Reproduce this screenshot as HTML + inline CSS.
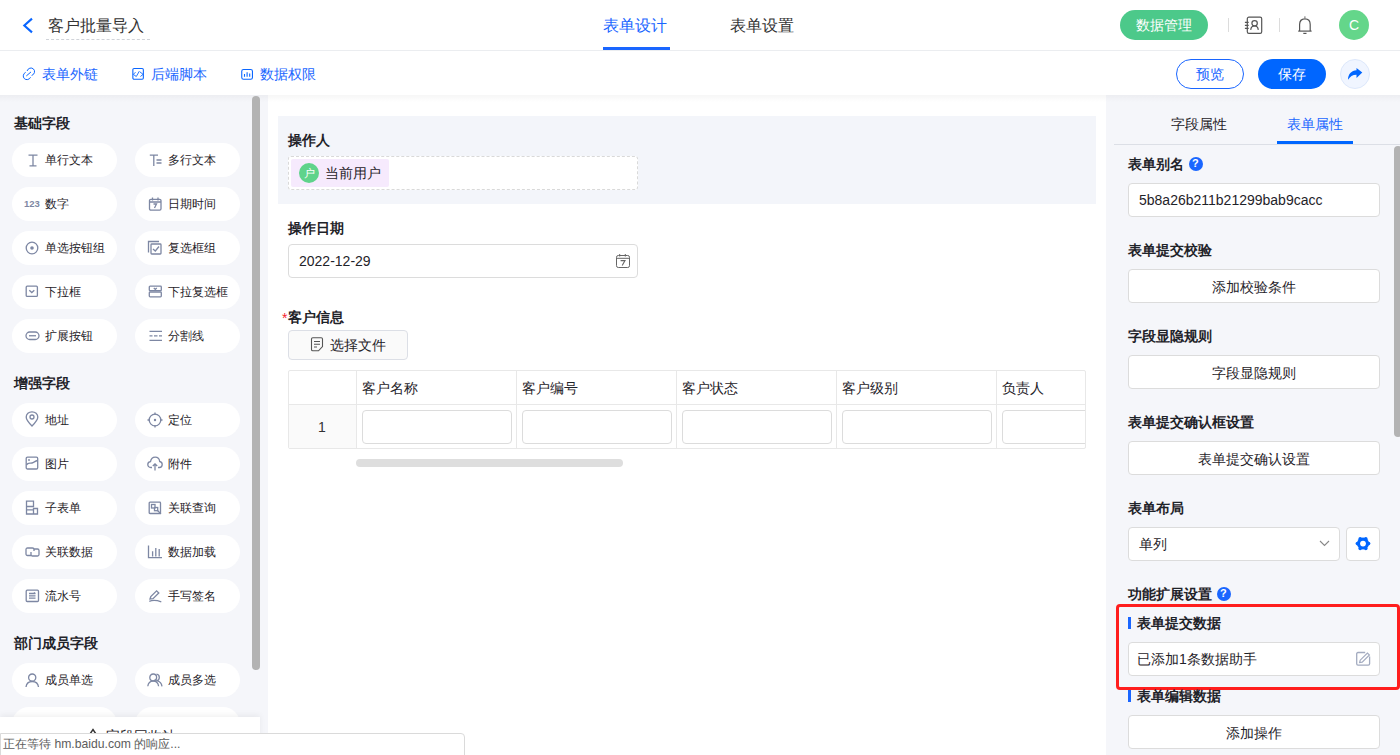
<!DOCTYPE html>
<html><head><meta charset="utf-8">
<style>
*{box-sizing:border-box;margin:0;padding:0}
html,body{width:1400px;height:755px;overflow:hidden;background:#fff;font-family:"Liberation Sans",sans-serif;color:#1f2329}
.a{position:absolute}
.t{position:absolute;white-space:nowrap;line-height:1}
svg{position:absolute;overflow:visible}
#hdr{left:0;top:0;width:1400px;height:51px;border-bottom:1px solid #ebedf0;background:#fff}
#tb{left:0;top:51px;width:1400px;height:44px;background:#fff}
#lp{left:0;top:95px;width:268px;height:660px;background:#f5f6fa}
#cv{left:268px;top:95px;width:838px;height:660px;background:#fff}
#rp{left:1106px;top:95px;width:294px;height:660px;background:#f5f6fa}
.shadow{left:0;top:95px;width:1400px;height:7px;background:linear-gradient(rgba(0,0,0,0.035),rgba(0,0,0,0))}
.sec{font-size:14px;font-weight:bold;color:#1f2329}
.pill{position:absolute;width:105px;height:34px;border-radius:17px;background:#fff}
.pill .t{left:33px;top:11px;font-size:12px;color:#1f2329}
.pill svg{left:12px;top:10px}
.lbl{font-size:14px;font-weight:bold;color:#1f2329}
.inp{position:absolute;background:#fff;border:1px solid #dcdcdc;border-radius:4px}
.btn{position:absolute;background:#fff;border:1px solid #dcdcdc;border-radius:4px;font-size:14px;color:#1f2329;text-align:center}
</style></head><body>
<!-- header -->
<div id="hdr" class="a"></div>
<svg style="left:22px;top:17px" width="12" height="17" viewBox="0 0 12 17"><path d="M10 1.6 L2.3 8.5 L10 15.4" fill="none" stroke="#0a66ff" stroke-width="2.1"/></svg>
<div class="t" style="left:48px;top:18px;font-size:16px;color:#333">客户批量导入</div>
<div class="a" style="left:46px;top:39px;width:104px;border-top:1px dashed #d0d3d9"></div>
<div class="t" style="left:603px;top:18px;font-size:16px;color:#1a66ff">表单设计</div>
<div class="a" style="left:603px;top:47px;width:67px;height:3px;background:#1a66ff"></div>
<div class="t" style="left:730px;top:18px;font-size:16px;color:#333">表单设置</div>
<div class="a" style="left:1120px;top:10px;width:88px;height:30px;border-radius:15px;background:#4cc98a"></div>
<div class="t" style="left:1136px;top:18px;font-size:14px;color:#fff">数据管理</div>
<div class="a" style="left:1228px;top:18px;width:1px;height:14px;background:#dcdcdc"></div>
<svg style="left:1244px;top:16px" width="19" height="19" viewBox="0 0 19 19"><g fill="none" stroke="#555" stroke-width="1.2"><rect x="3.3" y="1.2" width="14.4" height="16.1" rx="1.6"/><path d="M0.9 6.3 H4.7 M0.9 9.3 H4.7 M0.9 12.3 H4.7"/><circle cx="10.6" cy="7.3" r="2.7"/><path d="M6.7 13.9 C7 11 8.6 9.9 10.5 9.9 C12.4 9.9 14 11 14.3 13.9"/></g></svg>
<div class="a" style="left:1279px;top:18px;width:1px;height:14px;background:#dcdcdc"></div>
<svg style="left:1297px;top:16px" width="16" height="19" viewBox="0 0 16 19"><g fill="none" stroke="#555" stroke-width="1.2"><path d="M7.9 0.5 V1.8"/><path d="M2.6 15 V8.6 C2.6 5 4.9 2.9 7.9 2.9 C10.9 2.9 13.2 5 13.2 8.6 V15"/><path d="M1.2 15.1 H14.6"/><path d="M6.3 17.4 H9.5"/></g></svg>
<div class="a" style="left:1339px;top:10px;width:30px;height:30px;border-radius:50%;background:#64d68a"></div>
<div class="t" style="left:1349px;top:18px;font-size:14px;color:#fff">C</div>

<!-- toolbar -->
<div id="tb" class="a"></div>
<svg style="left:22px;top:67px" width="14" height="14" viewBox="0 0 14 14"><g fill="none" stroke="#0a66ff" stroke-width="1" stroke-linecap="round"><path d="M5.2 3.6 A3.8 3.8 0 1 1 10 8.35"/><path d="M3.3 5.5 A3.8 3.8 0 1 0 8.4 10.6"/><path d="M4.6 8.7 L8.7 5.2"/></g></svg>
<div class="t" style="left:42px;top:67px;font-size:14px;color:#1a66ff">表单外链</div>
<svg style="left:132px;top:67px" width="13" height="14" viewBox="0 0 13 14"><rect x="0.85" y="1.45" width="10.5" height="10.8" rx="1.2" fill="none" stroke="#0a66ff" stroke-width="1.1"/><path d="M3.5 5.2 L1.3 7.4 L4.3 9.5 L7.3 4.2 M7.9 4.85 L11.1 7.4 L8.4 9.5" fill="none" stroke="#0a66ff" stroke-width="0.9"/></svg>
<div class="t" style="left:151px;top:67px;font-size:14px;color:#1a66ff">后端脚本</div>
<svg style="left:241px;top:68px" width="13" height="13" viewBox="0 0 13 13"><rect x="0.75" y="1.55" width="10.7" height="9.7" rx="1.8" fill="none" stroke="#0a66ff" stroke-width="1.1"/><path d="M3.5 6 V8.8 M6.1 4.2 V8.8 M8.7 5.4 V8.8" stroke="#0a66ff" stroke-width="1.1"/></svg>
<div class="t" style="left:260px;top:67px;font-size:14px;color:#1a66ff">数据权限</div>
<div class="a" style="left:1176px;top:59px;width:68px;height:30px;border-radius:15px;border:1px solid #1a66ff;background:#fff"></div>
<div class="t" style="left:1196px;top:67px;font-size:14px;color:#1a66ff">预览</div>
<div class="a" style="left:1258px;top:59px;width:68px;height:30px;border-radius:15px;background:#0066ff"></div>
<div class="t" style="left:1278px;top:67px;font-size:14px;color:#fff">保存</div>
<div class="a" style="left:1340px;top:59px;width:30px;height:30px;border-radius:50%;background:#f0f5ff;border:1px solid #dde8fb"></div>
<svg style="left:1347px;top:67px" width="17" height="14" viewBox="0 0 17 14"><path d="M1 12.8 C1 7.2 4.5 3.6 9.5 3.3 V0.9 L15.3 5.5 L9.5 10.9 V7.7 C5.5 7.7 3 9.5 1 12.8 Z" fill="#0066ff"/></svg>

<!-- left panel -->
<div id="lp" class="a"></div>
<div id="cv" class="a"></div>
<div id="rp" class="a"></div>
<div class="a shadow"></div>

<div class="t sec" style="left:14px;top:116px">基础字段</div>
<div class="pill" style="left:12px;top:143px"><div class="t">单行文本</div></div>
<div class="pill" style="left:135px;top:143px"><div class="t">多行文本</div></div>
<div class="pill" style="left:12px;top:187px"><div class="t">数字</div></div>
<div class="pill" style="left:135px;top:187px"><div class="t">日期时间</div></div>
<div class="pill" style="left:12px;top:231px"><div class="t">单选按钮组</div></div>
<div class="pill" style="left:135px;top:231px"><div class="t">复选框组</div></div>
<div class="pill" style="left:12px;top:275px"><div class="t">下拉框</div></div>
<div class="pill" style="left:135px;top:275px"><div class="t">下拉复选框</div></div>
<div class="pill" style="left:12px;top:319px"><div class="t">扩展按钮</div></div>
<div class="pill" style="left:135px;top:319px"><div class="t">分割线</div></div>

<div class="t sec" style="left:14px;top:376px">增强字段</div>
<div class="pill" style="left:12px;top:403px"><div class="t">地址</div></div>
<div class="pill" style="left:135px;top:403px"><div class="t">定位</div></div>
<div class="pill" style="left:12px;top:447px"><div class="t">图片</div></div>
<div class="pill" style="left:135px;top:447px"><div class="t">附件</div></div>
<div class="pill" style="left:12px;top:491px"><div class="t">子表单</div></div>
<div class="pill" style="left:135px;top:491px"><div class="t">关联查询</div></div>
<div class="pill" style="left:12px;top:535px"><div class="t">关联数据</div></div>
<div class="pill" style="left:135px;top:535px"><div class="t">数据加载</div></div>
<div class="pill" style="left:12px;top:579px"><div class="t">流水号</div></div>
<div class="pill" style="left:135px;top:579px"><div class="t">手写签名</div></div>

<div class="t sec" style="left:14px;top:636px">部门成员字段</div>
<div class="pill" style="left:12px;top:663px"><div class="t">成员单选</div></div>
<div class="pill" style="left:135px;top:663px"><div class="t">成员多选</div></div>
<div class="pill" style="left:12px;top:707px"></div>
<div class="pill" style="left:135px;top:707px"></div>

<!--icons-->
<svg style="left:27px;top:154px" width="12" height="13" viewBox="0 0 12 13"><path d="M1.5 1.2 H10.5 M2.5 11.8 H9.5 M6 1.2 V11.8" fill="none" stroke="#7d87a3" stroke-width="1.3" stroke-width="1.5"/></svg>
<svg style="left:24px;top:199px" width="17" height="9" viewBox="0 0 17 9"><text x="0" y="7.8" font-family="Liberation Sans" font-weight="bold" font-size="9.5" fill="#7d87a3">123</text></svg>
<svg style="left:25px;top:241px" width="14" height="14" viewBox="0 0 14 14"><circle cx="7" cy="7" r="5.8" fill="none" stroke="#7d87a3" stroke-width="1.3"/><circle cx="7" cy="7" r="1.8" fill="#7d87a3"/></svg>
<svg style="left:25px;top:285px" width="14" height="13" viewBox="0 0 14 13"><rect x="1.2" y="1.2" width="11.2" height="10.2" rx="1" fill="none" stroke="#7d87a3" stroke-width="1.3"/><path d="M4.3 5.2 L6.8 7.5 L9.3 5.2" fill="none" stroke="#7d87a3" stroke-width="1.3"/></svg>
<svg style="left:25px;top:331px" width="15" height="10" viewBox="0 0 15 10"><rect x="1" y="1" width="13" height="7.5" rx="3.75" fill="none" stroke="#7d87a3" stroke-width="1.3"/><path d="M4 4.75 H11" fill="none" stroke="#7d87a3" stroke-width="1.3"/></svg>
<svg style="left:149px;top:154px" width="13" height="13" viewBox="0 0 13 13"><path d="M0.8 1.2 H9 M4.8 1.2 V12 M7.5 6 H12.5 M7.5 9 H12.5" fill="none" stroke="#7d87a3" stroke-width="1.3" stroke-width="1.5"/></svg>
<svg style="left:148px;top:197px" width="15" height="14" viewBox="0 0 15 14"><rect x="1.5" y="2.3" width="11.5" height="10.8" rx="1.3" fill="none" stroke="#7d87a3" stroke-width="1.3"/><path d="M1.5 5 H13 M4.5 0.5 V3.5 M10 0.5 V3.5 M5.5 7 H8.5 L6.5 11" fill="none" stroke="#7d87a3" stroke-width="1.3"/></svg>
<svg style="left:147px;top:240px" width="16" height="15" viewBox="0 0 16 15"><path d="M1.5 12.5 V1.5 H12" fill="none" stroke="#7d87a3" stroke-width="1.3"/><rect x="4" y="4" width="10" height="10" rx="0.8" fill="none" stroke="#7d87a3" stroke-width="1.3"/><path d="M6 9 L8.3 11 L12 6.5" fill="none" stroke="#7d87a3" stroke-width="1.3"/></svg>
<svg style="left:148px;top:285px" width="15" height="13" viewBox="0 0 15 13"><rect x="1.3" y="1.2" width="12" height="4.5" rx="0.8" fill="none" stroke="#7d87a3" stroke-width="1.3"/><rect x="1.3" y="7" width="12" height="4.8" rx="0.8" fill="none" stroke="#7d87a3" stroke-width="1.3"/><path d="M5.8 3 L7.3 4.3 L8.8 3" fill="none" stroke="#7d87a3" stroke-width="1.3"/></svg>
<svg style="left:149px;top:330px" width="14" height="12" viewBox="0 0 14 12"><path d="M0.5 1.3 H13 M0.5 10.3 H13" fill="none" stroke="#7d87a3" stroke-width="1.3"/><path d="M0.5 5.8 H3.5 M5 5.8 H8.5 M10 5.8 H13" fill="none" stroke="#7d87a3" stroke-width="1.3"/></svg>
<svg style="left:25px;top:411px" width="14" height="16" viewBox="0 0 14 16"><path d="M7 15 C3 11 1.2 8.5 1.2 6 C1.2 2.7 3.8 0.8 7 0.8 C10.2 0.8 12.8 2.7 12.8 6 C12.8 8.5 11 11 7 15Z" fill="none" stroke="#7d87a3" stroke-width="1.3"/><circle cx="7" cy="6" r="2" fill="none" stroke="#7d87a3" stroke-width="1.3"/></svg>
<svg style="left:25px;top:456px" width="14" height="14" viewBox="0 0 14 14"><rect x="1.2" y="1.2" width="11.5" height="11.8" rx="1.3" fill="none" stroke="#7d87a3" stroke-width="1.3"/><path d="M1.5 9 C3 6 5 7.5 7 7 C9 6.5 10 5 12.5 4.5" fill="none" stroke="#7d87a3" stroke-width="1.3"/><circle cx="4" cy="4" r="0.9" fill="#7d87a3"/></svg>
<svg style="left:25px;top:500px" width="15" height="16" viewBox="0 0 15 16"><path d="M1.5 1.2 H8.5 V6.5 H1.5 Z M1.5 6.5 V14 H12.5 V8.5 H8.5 V14 M1.5 9.8 H8.5" fill="none" stroke="#7d87a3" stroke-width="1.3"/></svg>
<svg style="left:25px;top:547px" width="16" height="10" viewBox="0 0 16 10"><path d="M6 8.5 H2.5 C1.6 8.5 1 7.9 1 7 V2.5 C1 1.6 1.6 1 2.5 1 H7.5 C8.4 1 9 1.6 9 2.5 V4 M9 2 H12.5 C13.4 2 14 2.6 14 3.5 V7.5 C14 8.4 13.4 9 12.5 9 H7.5 C6.6 9 6 8.4 6 7.5 V5" fill="none" stroke="#7d87a3" stroke-width="1.3"/></svg>
<svg style="left:25px;top:589px" width="15" height="14" viewBox="0 0 15 14"><rect x="1.2" y="1.2" width="12.3" height="11.3" rx="1" fill="none" stroke="#7d87a3" stroke-width="1.3"/><path d="M4 4.5 H10.5 M4 6.8 H10.5 M4 9.2 H10.5 M8.8 3.5 L10.5 4.5" fill="none" stroke="#7d87a3" stroke-width="1.3"/></svg>
<svg style="left:25px;top:673px" width="15" height="15" viewBox="0 0 15 15"><circle cx="7.2" cy="4.6" r="3.6" fill="none" stroke="#7d87a3" stroke-width="1.3"/><path d="M1 14 C1.5 10 4 8.5 7.2 8.5 C10.5 8.5 13 10 13.5 14" fill="none" stroke="#7d87a3" stroke-width="1.3"/></svg>
<svg style="left:147px;top:412px" width="16" height="16" viewBox="0 0 16 16"><circle cx="8" cy="8" r="5.8" fill="none" stroke="#7d87a3" stroke-width="1.3"/><circle cx="8" cy="8" r="1.2" fill="#7d87a3"/><path d="M8 0.5 V3 M8 13 V15.5 M0.5 8 H3 M13 8 H15.5" fill="none" stroke="#7d87a3" stroke-width="1.3"/></svg>
<svg style="left:147px;top:456px" width="16" height="15" viewBox="0 0 16 15"><path d="M5 11.5 H3.8 C2 11.5 0.8 10.2 0.8 8.5 C0.8 6.9 2 5.7 3.5 5.6 C4 3 5.8 1.2 8.2 1.2 C10.6 1.2 12.4 3 12.7 5.5 C14.2 5.8 15.2 7 15.2 8.5 C15.2 10.2 14 11.5 12.3 11.5 H11 M8 14.5 V8 M5.8 10 L8 7.8 L10.2 10" fill="none" stroke="#7d87a3" stroke-width="1.3"/></svg>
<svg style="left:148px;top:501px" width="14" height="14" viewBox="0 0 14 14"><rect x="1.2" y="1.2" width="11.3" height="11.3" rx="0.8" fill="none" stroke="#7d87a3" stroke-width="1.3"/><rect x="3.5" y="3.5" width="3.5" height="3.5" fill="none" stroke="#7d87a3" stroke-width="1.3" stroke-width="1.1"/><rect x="6.5" y="6.5" width="3.2" height="3.2" fill="none" stroke="#7d87a3" stroke-width="1.3" stroke-width="1.1"/><path d="M9.5 9.5 L13 13" fill="none" stroke="#7d87a3" stroke-width="1.3"/></svg>
<svg style="left:147px;top:545px" width="16" height="14" viewBox="0 0 16 14"><path d="M1.5 0.5 V12.6 H15 M5.6 6.3 V11.5 M8.8 3.1 V11.5 M12.2 4 V11.5" fill="none" stroke="#7d87a3" stroke-width="1.3"/></svg>
<svg style="left:148px;top:590px" width="15" height="13" viewBox="0 0 15 13"><path d="M1.3 11.4 C5 9.8 8.5 10.2 13.3 11.8" fill="none" stroke="#7d87a3" stroke-width="1.3"/><path d="M2 9 L2.8 6.5 L8.6 0.9 L10.8 3 L5 8.6 Z" fill="none" stroke="#7d87a3" stroke-width="1.3" stroke-width="1.2"/></svg>
<svg style="left:147px;top:673px" width="16" height="14" viewBox="0 0 16 14"><circle cx="6.2" cy="4.4" r="3.4" fill="none" stroke="#7d87a3" stroke-width="1.3"/><path d="M0.8 13.3 C1.2 9.8 3.3 8.2 6.2 8.2 C9.1 8.2 11.2 9.8 11.6 13.3 M9.5 1.2 C11 1.4 12.3 2.6 12.3 4.4 C12.3 6 11.3 7.2 10 7.6 C12.5 8.3 14.5 10 15 13.3" fill="none" stroke="#7d87a3" stroke-width="1.3"/></svg>
<div class="a" style="left:252px;top:96px;width:8px;height:574px;border-radius:4px;background:#b3b3b3"></div>

<!-- recycle bin -->
<div class="a" style="left:0;top:717px;width:260px;height:38px;background:#fff;box-shadow:0 -2px 6px rgba(0,0,0,0.06)"></div>
<svg style="left:88px;top:728px" width="10" height="10" viewBox="0 0 10 10"><path d="M2 6 L5 1.5 L8 6" fill="none" stroke="#333" stroke-width="1.4"/></svg><div class="t" style="left:106px;top:729px;font-size:14px;color:#1f2329">字段回收站</div>

<!-- canvas -->
<div class="a" style="left:278px;top:116px;width:818px;height:88px;background:#f3f5fa"></div>
<div class="t lbl" style="left:288px;top:133px">操作人</div>
<div class="a" style="left:288px;top:156px;width:350px;height:34px;border:1px dashed #d9d9d9;border-radius:3px;background:#fff"></div>
<div class="a" style="left:291px;top:159px;width:98px;height:28px;background:#f6eafd;border-radius:2px"></div>
<div class="a" style="left:299px;top:163px;width:20px;height:20px;border-radius:50%;background:#5fd38b"></div>
<div class="t" style="left:304px;top:168px;font-size:10.5px;color:#fff">户</div>
<div class="t" style="left:325px;top:166px;font-size:14px;color:#1f2329">当前用户</div>

<div class="t lbl" style="left:288px;top:221px">操作日期</div>
<div class="inp" style="left:288px;top:244px;width:350px;height:34px"></div>
<div class="t" style="left:299px;top:254px;font-size:14px;color:#1f2329">2022-12-29</div>
<svg style="left:615px;top:253px" width="16" height="16" viewBox="0 0 16 16"><g fill="none" stroke="#666" stroke-width="1"><rect x="1.5" y="2.5" width="13" height="12" rx="1.8"/><path d="M1.5 5.3 H14.5 M4.7 1 V3.5 M10.3 1 V3.5"/><path d="M5.6 7.6 H10 L7.2 12.6" stroke-width="1.1"/></g></svg>

<div class="t" style="left:282px;top:311px;font-size:14px;color:#f5222d">*</div>
<div class="t lbl" style="left:288px;top:310px">客户信息</div>
<div class="a" style="left:288px;top:330px;width:120px;height:30px;border:1px solid #dcdfe6;border-radius:4px;background:#fafafa"></div>
<svg style="left:310px;top:337px" width="14" height="15" viewBox="0 0 14 15"><path d="M1.5 2 C1.5 1.2 2 0.8 2.8 0.8 H11.2 C12 0.8 12.5 1.2 12.5 2 V9.5 L8.5 13.8 H2.8 C2 13.8 1.5 13.3 1.5 12.5Z M4 4.5 H10 M4 7.2 H10 M4 10 H7" fill="none" stroke="#555" stroke-width="1.1"/></svg>
<div class="t" style="left:330px;top:338px;font-size:14px;color:#1f2329">选择文件</div>

<!-- table -->
<div class="a" style="left:288px;top:370px;width:798px;height:79px;border:1px solid #e8e8e8;border-radius:2px"></div>
<div class="a" style="left:289px;top:405px;width:67px;height:43px;background:#fafafa"></div>
<div class="a" style="left:289px;top:404px;width:797px;height:1px;background:#e8e8e8"></div>
<div class="a" style="left:356px;top:371px;width:1px;height:77px;background:#e8e8e8"></div>
<div class="a" style="left:516px;top:371px;width:1px;height:77px;background:#e8e8e8"></div>
<div class="a" style="left:676px;top:371px;width:1px;height:77px;background:#e8e8e8"></div>
<div class="a" style="left:836px;top:371px;width:1px;height:77px;background:#e8e8e8"></div>
<div class="a" style="left:996px;top:371px;width:1px;height:77px;background:#e8e8e8"></div>
<div class="t" style="left:362px;top:381px;font-size:14px;color:#1f2329">客户名称</div>
<div class="t" style="left:522px;top:381px;font-size:14px;color:#1f2329">客户编号</div>
<div class="t" style="left:682px;top:381px;font-size:14px;color:#1f2329">客户状态</div>
<div class="t" style="left:842px;top:381px;font-size:14px;color:#1f2329">客户级别</div>
<div class="t" style="left:1002px;top:381px;font-size:14px;color:#1f2329">负责人</div>
<div class="t" style="left:318px;top:420px;font-size:14px;color:#333">1</div>
<div class="inp" style="left:362px;top:410px;width:150px;height:34px"></div>
<div class="inp" style="left:522px;top:410px;width:150px;height:34px"></div>
<div class="inp" style="left:682px;top:410px;width:150px;height:34px"></div>
<div class="inp" style="left:842px;top:410px;width:150px;height:34px"></div>
<div class="a" style="left:1002px;top:410px;width:83px;height:34px;overflow:hidden"><div class="inp" style="left:0;top:0;width:150px;height:34px"></div></div>
<div class="a" style="left:356px;top:459px;width:267px;height:8px;border-radius:4px;background:#dedede"></div>

<!-- right panel -->
<div class="t" style="left:1171px;top:117px;font-size:14px;color:#1f2329">字段属性</div>
<div class="t" style="left:1287px;top:117px;font-size:14px;color:#1a66ff">表单属性</div>
<div class="a" style="left:1114px;top:144px;width:286px;height:1px;background:#dcdfe6"></div>
<div class="a" style="left:1277px;top:141px;width:76px;height:3px;background:#0066ff"></div>
<div class="a" style="left:1394px;top:146px;width:8px;height:291px;border-radius:4px;background:#b3b3b3"></div>

<div class="t lbl" style="left:1128px;top:157px">表单别名</div>
<div class="a" style="left:1189px;top:157px;width:14px;height:14px;border-radius:50%;background:#1a66ff"></div>
<div class="t" style="left:1192px;top:158px;font-size:11px;font-weight:bold;color:#fff">?</div>
<div class="inp" style="left:1128px;top:183px;width:252px;height:34px"></div>
<div class="t" style="left:1139px;top:193px;font-size:14px;color:#1f2329">5b8a26b211b21299bab9cacc</div>

<div class="t lbl" style="left:1128px;top:243px">表单提交校验</div>
<div class="btn" style="left:1128px;top:269px;width:252px;height:34px"><div class="t" style="left:0;width:250px;top:10px">添加校验条件</div></div>
<div class="t lbl" style="left:1128px;top:329px">字段显隐规则</div>
<div class="btn" style="left:1128px;top:355px;width:252px;height:34px"><div class="t" style="left:0;width:250px;top:10px">字段显隐规则</div></div>
<div class="t lbl" style="left:1128px;top:415px">表单提交确认框设置</div>
<div class="btn" style="left:1128px;top:441px;width:252px;height:34px"><div class="t" style="left:0;width:250px;top:10px">表单提交确认设置</div></div>
<div class="t lbl" style="left:1128px;top:501px">表单布局</div>
<div class="inp" style="left:1128px;top:527px;width:212px;height:34px"></div>
<div class="t" style="left:1139px;top:537px;font-size:14px;color:#1f2329">单列</div>
<svg style="left:1319px;top:540px" width="11" height="7" viewBox="0 0 11 7"><path d="M1 1 L5.5 5.5 L10 1" fill="none" stroke="#888" stroke-width="1.1"/></svg>
<div class="inp" style="left:1346px;top:527px;width:34px;height:34px"></div>
<svg style="left:1355px;top:536px" width="16" height="15" viewBox="0 0 16 15"><g transform="translate(0,0.6)"><g fill="#0066ff"><circle cx="8" cy="7" r="6"/><circle cx="13.6" cy="7" r="1.8"/><circle cx="10.8" cy="2.15" r="1.8"/><circle cx="5.2" cy="2.15" r="1.8"/><circle cx="2.4" cy="7" r="1.8"/><circle cx="5.2" cy="11.85" r="1.8"/><circle cx="10.8" cy="11.85" r="1.8"/></g><circle cx="8" cy="7" r="2.9" fill="#fff"/></g></svg>

<div class="t lbl" style="left:1128px;top:587px">功能扩展设置</div>
<div class="a" style="left:1217px;top:587px;width:14px;height:14px;border-radius:50%;background:#1a66ff"></div>
<div class="t" style="left:1220px;top:588px;font-size:11px;font-weight:bold;color:#fff">?</div>

<div class="a" style="left:1116px;top:604px;width:284px;height:86px;border:3px solid #ff1e1e;border-radius:4px"></div>
<div class="a" style="left:1128px;top:617px;width:3px;height:12px;background:#1a66ff"></div>
<div class="t lbl" style="left:1137px;top:616px">表单提交数据</div>
<div class="inp" style="left:1128px;top:642px;width:252px;height:34px"></div>
<div class="t" style="left:1137px;top:652px;font-size:14px;color:#1f2329">已添加1条数据助手</div>
<svg style="left:1355px;top:651px" width="16" height="16" viewBox="0 0 16 16"><path d="M10.2 1.5 H3 C2.2 1.5 1.7 2 1.7 2.8 V12.8 C1.7 13.6 2.2 14.1 3 14.1 H13.3 C14.1 14.1 14.6 13.6 14.6 12.8 V5.5" fill="none" stroke="#a3abc0" stroke-width="1.3"/><path d="M4.6 11.6 L5.2 9.2 L12.4 2 L14.4 4 L7.2 11.2 Z" fill="none" stroke="#a3abc0" stroke-width="1.2"/></svg>
<div class="a" style="left:1128px;top:690px;width:3px;height:12px;background:#1a66ff"></div>
<div class="t lbl" style="left:1137px;top:689px">表单编辑数据</div>
<div class="btn" style="left:1128px;top:715px;width:252px;height:34px"><div class="t" style="left:0;width:250px;top:10px">添加操作</div></div>

<!-- status bar -->
<div class="a" style="left:0;top:733px;width:465px;height:30px;background:#fff;border:1px solid #dadada;border-radius:0 4px 0 0"></div>
<div class="t" style="left:3px;top:738px;font-size:12.2px;color:#5c5c5c">正在等待 hm.baidu.com 的响应...</div>
</body></html>
